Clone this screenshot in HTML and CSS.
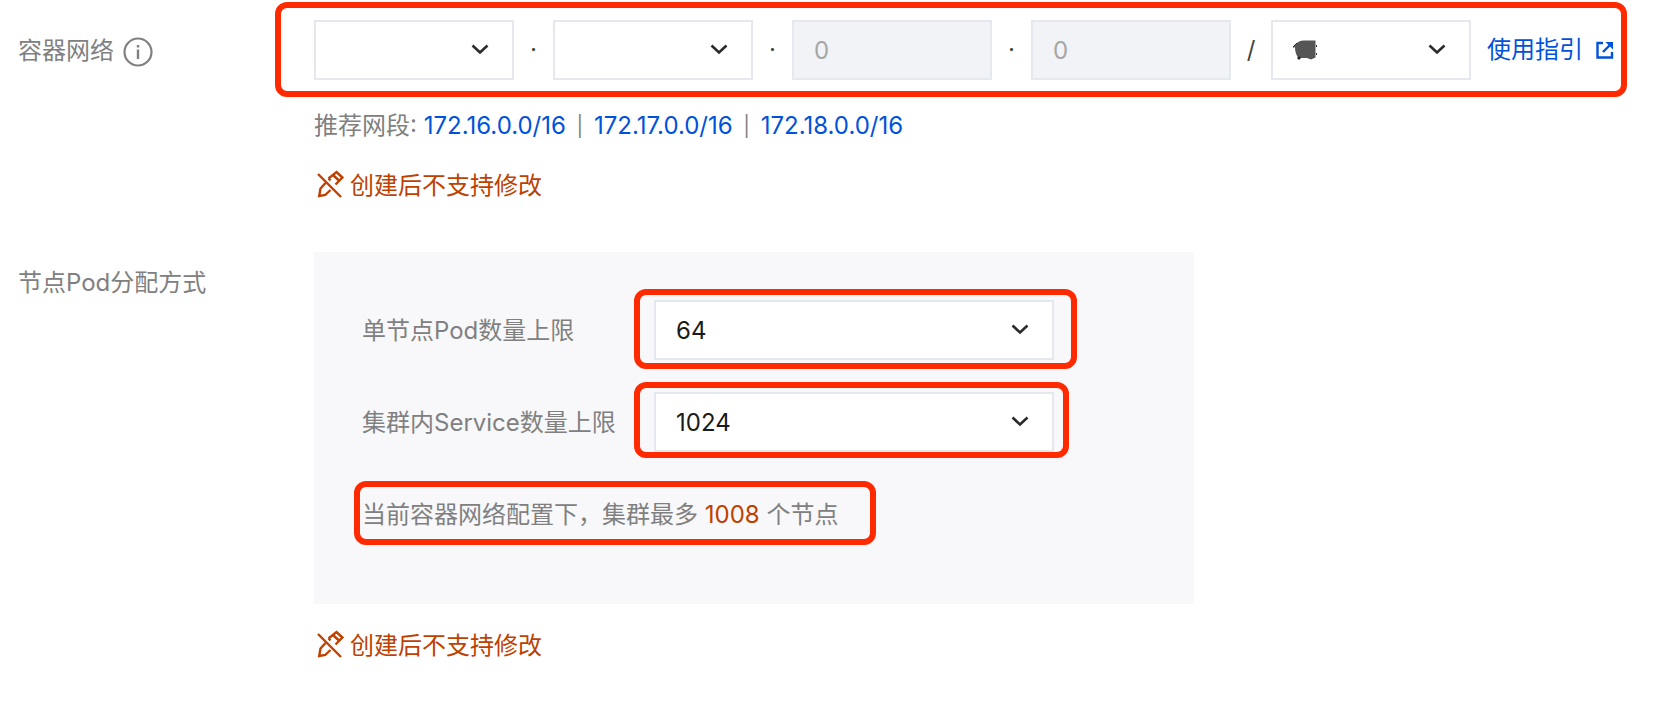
FILE: index.html
```html
<!DOCTYPE html>
<html lang="zh-CN">
  <head>
    <meta charset="UTF-8" />
    <meta name="viewport" content="width=device-width, initial-scale=1" />
    <title>容器网络</title>
    <link rel="stylesheet" href="styles.css" />
  </head>
  <body>
    <!-- 公用图标 -->
    <svg class="sprite" aria-hidden="true">
      <symbol id="chevron" viewBox="0 0 20 12">
        <path d="M2.5 2.5 10 9.5l7.5-7" fill="none" stroke="currentColor" stroke-width="2.6" />
      </symbol>
      <symbol id="no-edit" viewBox="0 0 28 28">
        <g fill="none" stroke="currentColor" stroke-width="2.4">
          <path d="M2 4 25 27" />
          <path d="M9.5 13 4.5 18.5 3.2 26l6-1L14.500 20" />
          <path d="M12.500 8.500 20.500 2 26.400 7.500 19.500 14.500" />
          <path d="M12.500 8.500l2 2M17.500 5.500l6 5.500" />
        </g>
      </symbol>
    </svg>

    <form class="form">
      <div class="form-row">
        <div class="form-label">
          <span id="networkLabel">容器网络</span>
          <svg class="info-icon" viewBox="0 0 32 32">
            <circle cx="16" cy="16" r="13.5" fill="none" stroke="currentColor" stroke-width="2.2" />
            <path d="M16 13.5v9.500M16 9v2.500" stroke="currentColor" stroke-width="2.4" />
          </svg>
        </div>
        <div class="form-content">
          <div class="cidr" role="group" aria-labelledby="networkLabel">
            <div class="select">
              <select aria-label="网段第一段">
                <option></option>
              </select>
              <svg class="arrow"><use href="#chevron" /></svg>
            </div>
            <span class="sep">·</span>
            <div class="select">
              <select aria-label="网段第二段">
                <option></option>
              </select>
              <svg class="arrow"><use href="#chevron" /></svg>
            </div>
            <span class="sep">·</span>
            <input class="input" type="text" value="0" aria-label="网段第三段" disabled />
            <span class="sep">·</span>
            <input class="input" type="text" value="0" aria-label="网段第四段" disabled />
            <span class="sep sep-slash">/</span>
            <div class="select">
              <select aria-label="掩码位数">
                <option></option>
              </select>
              <svg class="smudge" viewBox="0 0 24 20">
                <path d="M0 7Q4 1 10 .5H22.500V17.500L18 19.500 14 18H7L5.500 19 4.500 16.500Q2 13 2 7L0 8Z" fill="#555" />
                <path d="M0 7 4 3M5 17h2v2H5zM23.500 5v2M23.500 13v2" stroke="#333" stroke-width="1" />
              </svg>
              <svg class="arrow"><use href="#chevron" /></svg>
            </div>
            <a class="guide" href="#">
              使用指引
              <svg class="external" viewBox="0 0 18 18">
                <path d="M7 2H1.500v14.500H16V11" fill="none" stroke="currentColor" stroke-width="2.4" />
                <path d="M7 11 14 4" stroke="currentColor" stroke-width="2.4" />
                <path d="M9.500 1H17v7.500Z" fill="currentColor" />
              </svg>
            </a>
            <span class="mark mark-cidr"></span>
          </div>
          <p class="hint">
            推荐网段: <a href="#">172.16.0.0/16</a><span class="bar">|</span><a href="#">172.17.0.0/16</a><span class="bar">|</span><a href="#">172.18.0.0/16</a>
          </p>
          <p class="warning">
            <svg class="warning-icon"><use href="#no-edit" /></svg>
            创建后不支持修改
          </p>
        </div>
      </div>

      <div class="form-row">
        <div class="form-label">节点Pod分配方式</div>
        <div class="form-content">
          <div class="panel">
            <div class="panel-row">
              <label for="podLimit">单节点Pod数量上限</label>
              <div class="select select-wide">
                <select id="podLimit">
                  <option>64</option>
                </select>
                <svg class="arrow"><use href="#chevron" /></svg>
                <span class="mark mark-pod"></span>
              </div>
            </div>
            <div class="panel-row">
              <label for="serviceLimit">集群内Service数量上限</label>
              <div class="select select-wide">
                <select id="serviceLimit">
                  <option>1024</option>
                </select>
                <svg class="arrow"><use href="#chevron" /></svg>
                <span class="mark mark-service"></span>
              </div>
            </div>
            <div class="panel-row">
              <p class="summary">
                当前容器网络配置下，集群最多 <strong>1008</strong> 个节点
                <span class="mark mark-summary"></span>
              </p>
            </div>
          </div>
          <p class="warning">
            <svg class="warning-icon"><use href="#no-edit" /></svg>
            创建后不支持修改
          </p>
        </div>
      </div>
    </form>
  </body>
</html>
```
FILE: styles.css
```css
* {
  box-sizing: border-box;
}
body {
  margin: 0;
  padding: 20px 18px;
  background: #fff;
  color: #808080;
  font-family: Inter, "Noto Sans CJK SC", sans-serif;
  font-size: 24px;
  line-height: 36px;
}
p {
  margin: 0;
}
a {
  color: #0052d9;
  text-decoration: none;
}
.sprite {
  display: none;
}
.form-row {
  display: grid;
  grid-template-columns: 296px 1fr;
  margin-bottom: 48px;
}
.form-label {
  display: flex;
  align-items: flex-start;
  gap: 8px;
  padding-top: 13px;
}
.info-icon {
  width: 32px;
  height: 32px;
  margin-top: 3px;
}

/* controls */
.cidr {
  position: relative;
  display: flex;
  align-items: center;
  width: fit-content;
}
.select,
.input {
  width: 200px;
  height: 60px;
}
.select {
  position: relative;
}
.select-wide {
  width: 400px;
}
.select select,
.input {
  border: 2px solid #e5e8ef;
  border-radius: 0;
  padding: 0 20px;
  font: inherit;
}
.select select {
  width: 100%;
  height: 100%;
  padding-top: 2px;
  appearance: none;
  background: #fff;
  color: #1a1a1a;
}
.input:disabled {
  background: #f2f3f7;
  color: #a6a6a6;
}
.arrow {
  position: absolute;
  top: 23px;
  right: 24px;
  width: 20px;
  height: 12px;
  color: #2b2b2b;
  pointer-events: none;
}
.smudge {
  position: absolute;
  top: 20px;
  left: 22px;
  width: 24px;
  height: 20px;
  pointer-events: none;
}
.sep {
  width: 39px;
  color: #444;
  text-align: center;
}
.sep-slash {
  width: 40px;
}
.guide {
  display: flex;
  align-items: center;
  gap: 13px;
  margin-left: 16px;
  white-space: nowrap;
}
.external {
  width: 18px;
  height: 18px;
}

.hint {
  margin-top: 28px;
}
.bar {
  display: inline-block;
  width: 28px;
  font-size: 20px;
  text-align: center;
  vertical-align: top;
}
.warning {
  display: flex;
  align-items: flex-start;
  gap: 6px;
  margin-top: 24px;
  padding-left: 2px;
  color: #be4100;
}
.warning-icon {
  width: 28px;
  height: 28px;
  margin-top: 2px;
}

.panel {
  max-width: 880px;
  padding: 48px 48px 60px;
  background: #f8f8fa;
}
.panel-row {
  display: grid;
  grid-template-columns: 292px 1fr;
  align-items: center;
  min-height: 60px;
}
.panel-row + .panel-row {
  margin-top: 32px;
}
.panel-row label,
.summary {
  padding-top: 2px;
}
.summary {
  position: relative;
  grid-column: 1 / -1;
  width: fit-content;
}
.summary strong {
  color: #be4100;
  font-weight: 400;
}

/* red highlight frames */
.mark {
  position: absolute;
  border: 6px solid #ff2a00;
  border-radius: 12px;
  pointer-events: none;
}
.mark-cidr {
  inset: -18px -13px -17px -39px;
}
.mark-pod {
  inset: -11px -23px -9px -20px;
}
.mark-service {
  inset: -10px -15px -6px -20px;
}
.mark-summary {
  inset: -14px -38px -12px -8px;
}
```
